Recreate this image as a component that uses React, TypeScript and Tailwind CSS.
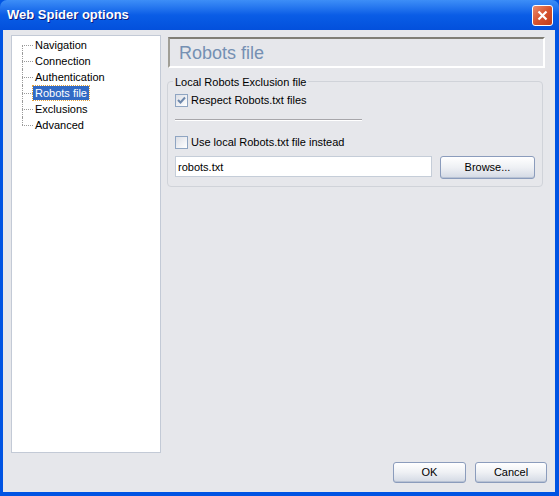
import { useState } from 'react'

const ITEMS = ['Navigation', 'Connection', 'Authentication', 'Robots file', 'Exclusions', 'Advanced']

function Check({ checked }: { checked: boolean }) {
  return (
    <span className="w-[13px] h-[13px] border border-[#8fa5c2] bg-gradient-to-br from-[#dcdfe6] to-[#ffffff] flex items-center justify-center flex-shrink-0">
      {checked && (
        <svg width="9" height="9" viewBox="0 0 9 9">
          <path d="M1 4 L3.5 6.5 L8 1.5" stroke="#6d87ab" strokeWidth="2" fill="none" />
        </svg>
      )}
    </span>
  )
}

function XpButton({ label, className }: { label: string; className: string }) {
  return (
    <button className={`rounded-[3px] border border-[#8b9cbc] bg-gradient-to-b from-[#ffffff] via-[#eef0f4] to-[#d3d9e4] text-[11px] text-black shadow-[inset_0_-1px_0_#b8c2d4] ${className}`}>
      {label}
    </button>
  )
}

export default function App() {
  const [selected, setSelected] = useState(3)
  const [respect, setRespect] = useState(true)
  const [useLocal, setUseLocal] = useState(false)

  return (
    <div className="w-[559px] h-[496px] flex flex-col bg-[#0054e3] font-['Liberation_Sans',Arial,sans-serif] text-[11px] text-black">
      {/* title bar */}
      <div className="h-[30px] flex items-center justify-between pl-[7px] pr-[6px] rounded-t-[7px] bg-gradient-to-b from-[#3d8ef7] via-[#0a5de6] to-[#0350dc]">
        <span className="text-white font-bold text-[13px] [text-shadow:1px_1px_0_#0a1a80]">Web Spider options</span>
        <div className="w-[21px] h-[21px] rounded-[3px] border border-white bg-gradient-to-br from-[#eb8b6c] via-[#d6532f] to-[#c13c1a] flex items-center justify-center">
          <svg width="11" height="11" viewBox="0 0 11 11">
            <path d="M1.5 1.5 L9.5 9.5 M9.5 1.5 L1.5 9.5" stroke="white" strokeWidth="2.2" />
          </svg>
        </div>
      </div>

      {/* body */}
      <div className="flex-1 flex flex-col ml-[3px] mr-[4px] mb-[4px] bg-[#e6e7eb]">
        <div className="flex pt-[5px] pl-[8px]">
          {/* tree */}
          <div className="w-[150px] h-[418px] flex-shrink-0 bg-white border border-[#c3cad6] pl-[10px] pt-[1px]">
            {ITEMS.map((it, i) => (
              <div key={it} className="h-[16px] flex items-stretch cursor-default" onClick={() => setSelected(i)}>
                <div className="w-[11px] flex flex-col flex-shrink-0">
                  <div className={`h-[8px] ${i > 0 ? 'border-l border-dotted border-[#9a9a9a]' : ''}`} />
                  <div className={`flex-1 border-t border-dotted border-[#9a9a9a] ${i < ITEMS.length - 1 ? 'border-l' : ''}`} />
                </div>
                <div className="flex items-center">
                  <span
                    className={`px-[2px] leading-[14px] ${selected === i ? 'bg-[#316ac5] text-white outline-1 outline-dotted outline-[#e0a040]' : ''}`}
                  >
                    {it}
                  </span>
                </div>
              </div>
            ))}
          </div>

          {/* right panel */}
          <div className="flex-1 min-w-0 pl-[7px] pr-[10px] pt-[2px]">
            <div className="h-[31px] border-2 border-t-[#807e76] border-l-[#a09e96] border-b-white border-r-white flex items-center pl-[9px] pt-[1px]">
              <span className="text-[18px] text-[#7590b3]">Robots file</span>
            </div>

            <div className="relative mt-[13px] ml-[-1px] mr-[2px] h-[106px] border border-[#d0d3d9] rounded-[4px] px-[7px] pt-[11px]">
              <span className="absolute -top-[6px] left-[5px] bg-[#e6e7eb] px-[2px] leading-[13px]">Local Robots Exclusion file</span>
              <label className="flex items-center gap-[3px] h-[14px]" onClick={() => setRespect(!respect)}>
                <Check checked={respect} />
                <span>Respect Robots.txt files</span>
              </label>
              <div className="mt-[12px] w-[187px] border-t border-[#a7a6aa] border-b border-b-white" />
              <label className="mt-[14px] flex items-center gap-[3px] h-[14px]" onClick={() => setUseLocal(!useLocal)}>
                <Check checked={useLocal} />
                <span>Use local Robots.txt file instead</span>
              </label>
              <div className="mt-[7px] flex items-start gap-[8px]">
                <input
                  defaultValue="robots.txt"
                  className="w-[257px] h-[21px] bg-white border border-[#c5cdd8] px-[2px] text-[11px] outline-none"
                />
                <XpButton label="Browse..." className="w-[95px] h-[23px]" />
              </div>
            </div>
          </div>
        </div>

        {/* footer */}
        <div className="mt-auto flex justify-end gap-[9px] pr-[8px] pb-[9px]">
          <XpButton label="OK" className="w-[73px] h-[21px]" />
          <XpButton label="Cancel" className="w-[72px] h-[21px]" />
        </div>
      </div>
    </div>
  )
}
